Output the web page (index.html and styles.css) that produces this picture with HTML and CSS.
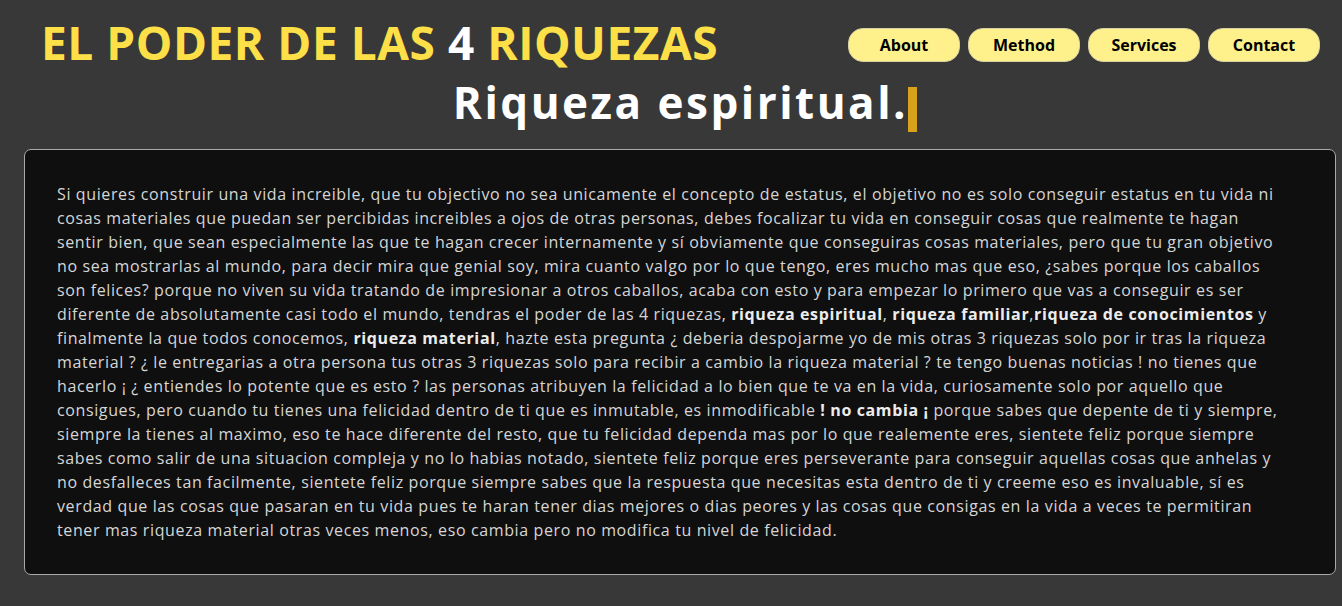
FILE: index.html
```html
<!DOCTYPE html>
<html lang="es">
<head>
<meta charset="utf-8">
<title>El poder de las 4 riquezas</title>
<link rel="stylesheet" href="styles.css">
</head>
<body>
<header class="topbar">
  <h1 class="brand">EL PODER DE LAS <span class="brand-num">4</span> RIQUEZAS</h1>
  <nav class="nav">
    <a class="nav-btn" href="#">About</a>
    <a class="nav-btn" href="#">Method</a>
    <a class="nav-btn" href="#">Services</a>
    <a class="nav-btn" href="#">Contact</a>
  </nav>
</header>
<h2 class="subtitle"><span class="subtitle-text">Riqueza espiritual.</span><span class="cursor"></span></h2>
<main class="card">
  <p class="card-text">Si quieres construir una vida increible, que tu objectivo no sea unicamente el concepto de estatus, el objetivo no es solo conseguir estatus en tu vida ni<br>cosas materiales que puedan ser percibidas increibles a ojos de otras personas, debes focalizar tu vida en conseguir cosas que realmente te hagan<br>sentir bien, que sean especialmente las que te hagan crecer internamente y sí obviamente que conseguiras cosas materiales, pero que tu gran objetivo<br>no sea mostrarlas al mundo, para decir mira que genial soy, mira cuanto valgo por lo que tengo, eres mucho mas que eso, ¿sabes porque los caballos<br>son felices? porque no viven su vida tratando de impresionar a otros caballos, acaba con esto y para empezar lo primero que vas a conseguir es ser<br>diferente de absolutamente casi todo el mundo, tendras el poder de las 4 riquezas, <b>riqueza espiritual</b>, <b>riqueza familiar</b>,<b>riqueza de conocimientos</b> y<br>finalmente la que todos conocemos, <b>riqueza material</b>, hazte esta pregunta ¿ deberia despojarme yo de mis otras 3 riquezas solo por ir tras la riqueza<br>material ? ¿ le entregarias a otra persona tus otras 3 riquezas solo para recibir a cambio la riqueza material ? te tengo buenas noticias ! no tienes que<br>hacerlo ¡ ¿ entiendes lo potente que es esto ? las personas atribuyen la felicidad a lo bien que te va en la vida, curiosamente solo por aquello que<br>consigues, pero cuando tu tienes una felicidad dentro de ti que es inmutable, es inmodificable <b>! no cambia ¡</b> porque sabes que depente de ti y siempre,<br>siempre la tienes al maximo, eso te hace diferente del resto, que tu felicidad dependa mas por lo que realemente eres, sientete feliz porque siempre<br>sabes como salir de una situacion compleja y no lo habias notado, sientete feliz porque eres perseverante para conseguir aquellas cosas que anhelas y<br>no desfalleces tan facilmente, sientete feliz porque siempre sabes que la respuesta que necesitas esta dentro de ti y creeme eso es invaluable, sí es<br>verdad que las cosas que pasaran en tu vida pues te haran tener dias mejores o dias peores y las cosas que consigas en la vida a veces te permitiran<br>tener mas riqueza material otras veces menos, eso cambia pero no modifica tu nivel de felicidad.</p>
</main>
</body>
</html>
```
FILE: styles.css
```css
html, body {
  margin: 0;
  padding: 0;
}
body {
  background: #383838;
  font-family: "Open Sans", "Liberation Sans", sans-serif;
  height: 606px;
  overflow: hidden;
}
.topbar {
  display: flex;
  justify-content: space-between;
  align-items: flex-start;
  padding: 19px 22px 0 41px;
}
.brand {
  margin: 0;
  font-size: 46px;
  line-height: 46px;
  font-weight: 700;
  color: #fde047;
  letter-spacing: 0.55px;
  white-space: nowrap;
}
.brand-num {
  color: #ffffff;
}
.nav {
  display: flex;
  gap: 8px;
  margin-top: 9px;
}
.nav-btn {
  display: flex;
  align-items: center;
  justify-content: center;
  width: 112px;
  height: 34px;
  box-sizing: border-box;
  background: #fef08a;
  border: 1px solid #d8d2a0;
  border-radius: 15px;
  color: #000;
  font-weight: 700;
  font-size: 16px;
  text-decoration: none;
}
.subtitle {
  margin: 13px 0 0;
  padding-left: 28px;
  text-align: center;
  font-size: 44px;
  line-height: 48px;
  font-weight: 700;
  color: #ffffff;
  white-space: nowrap;
}
.subtitle-text {
  letter-spacing: 2.5px;
}
.cursor {
  display: inline-block;
  width: 9px;
  height: 45px;
  margin-left: 0;
  background: #d9a21b;
  vertical-align: -13px;
}
.card {
  display: block;
  margin: 17px 6px 0 24px;
  background: #0f0f0f;
  border: 1px solid #a9a9a9;
  border-radius: 7px;
}
.card-text {
  margin: 0;
  padding: 32px;
  font-size: 16px;
  line-height: 24px;
  font-weight: 500;
  color: #d6d6d6;
  white-space: nowrap;
  letter-spacing: 0.62px;
}
.card-text b {
  font-weight: 700;
  color: #ececec;
}
```
